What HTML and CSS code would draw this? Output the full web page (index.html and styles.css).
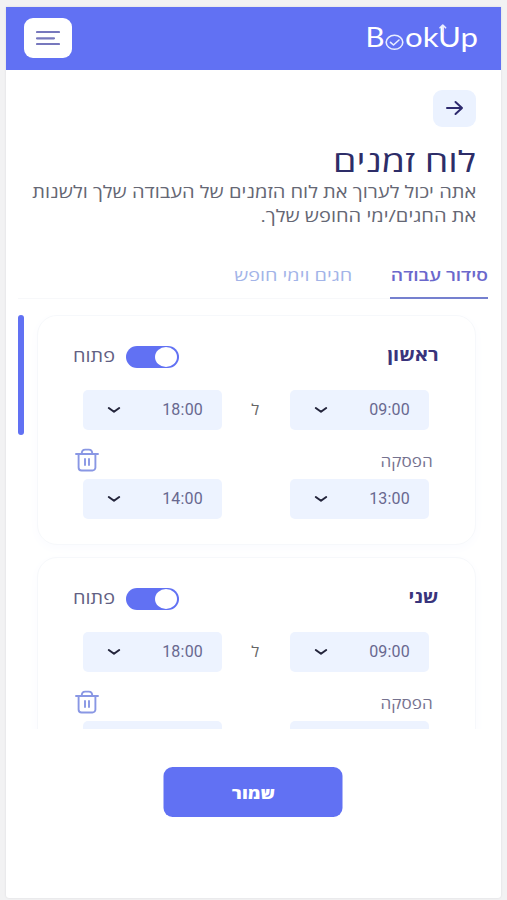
FILE: index.html
```html
<!DOCTYPE html>
<html lang="he" dir="rtl">
<head>
<meta charset="utf-8">
<title>BookUp</title>
<link rel="stylesheet" href="styles.css">
</head>
<body>
<svg class="defs" aria-hidden="true">
  <symbol id="chevron" viewBox="0 0 14 8"><path d="M1.800 2 7 5.800l5.200-3.800"/></symbol>
  <symbol id="trash" viewBox="0 0 24 24"><path d="M1 6h22M3.600 6v13.500a3 3 0 0 0 3 3h10.800a3 3 0 0 0 3-3V6M6.700 6c0-3 1.300-4.400 3.500-4.400h3.600c2.200 0 3.500 1.400 3.500 4.400M10 11v6M14 11v6"/></symbol>
</svg>
<div class="app">
  <header class="topbar">
    <svg class="logo" viewBox="0 0 114 34">
      <g class="logo-text">
        <text x="-.5" y="26.500" textLength="19" lengthAdjust="spacingAndGlyphs">B</text>
        <text x="39" y="26.500" textLength="73" lengthAdjust="spacingAndGlyphs">okUp</text>
      </g>
      <g class="logo-mark"><ellipse cx="28.500" cy="22.300" rx="8.300" ry="7"/><path d="m24.500 22.300 3 2.700 5.500-5M76.800 12V5M74 7.800 76.800 5 79.600 7.800"/></g>
    </svg>
    <button class="menu" aria-label="תפריט"><svg viewBox="0 0 24 16"><path d="M1 2h22M1 8.300h17M1 14h22"/></svg></button>
  </header>
  <main class="page">
    <button class="back" aria-label="חזרה"><svg viewBox="0 0 18 16"><path d="M1 8h15M9.500 2 16 8l-6.500 6"/></svg></button>
    <h1 class="title">לוח זמנים</h1>
    <p class="intro">אתה יכול לערוך את לוח הזמנים של העבודה שלך ולשנות<br>את החגים/ימי החופש שלך.</p>
    <nav class="tabs">
      <a class="tab active"><span>סידור עבודה</span></a>
      <a class="tab"><span>חגים וימי חופש</span></a>
    </nav>
    <div class="scroller">
      <div class="days">
        <section class="card">
          <div class="head"><h2 class="day">ראשון</h2><span class="toggle"></span><span class="state">פתוח</span></div>
          <div class="times">
            <div class="select"><span>09:00</span><svg><use href="#chevron"/></svg></div>
            <span class="to">ל</span>
            <div class="select"><span>18:00</span><svg><use href="#chevron"/></svg></div>
          </div>
          <div class="break"><span class="break-name">הפסקה</span><svg><use href="#trash"/></svg></div>
          <div class="times">
            <div class="select"><span>13:00</span><svg><use href="#chevron"/></svg></div>
            <div class="select"><span>14:00</span><svg><use href="#chevron"/></svg></div>
          </div>
        </section>
        <section class="card">
          <div class="head"><h2 class="day">שני</h2><span class="toggle"></span><span class="state">פתוח</span></div>
          <div class="times">
            <div class="select"><span>09:00</span><svg><use href="#chevron"/></svg></div>
            <span class="to">ל</span>
            <div class="select"><span>18:00</span><svg><use href="#chevron"/></svg></div>
          </div>
          <div class="break"><span class="break-name">הפסקה</span><svg><use href="#trash"/></svg></div>
          <div class="times">
            <div class="select"></div>
            <div class="select"></div>
          </div>
        </section>
      </div>
      <div class="track"><div class="thumb"></div></div>
    </div>
    <button class="save"><span>שמור</span></button>
  </main>
</div>
</body>
</html>
```
FILE: styles.css
```css
* { box-sizing: border-box; }
body { margin: 0; height: 900px; overflow: hidden; padding: 7px 6px 2px; background: #f2f2f3; font-family: "Open Sans", "Noto Sans", sans-serif; }
button { border: 0; padding: 0; font-family: inherit; display: flex; align-items: center; justify-content: center; }
svg { fill: none; stroke-linecap: round; stroke-linejoin: round; display: block; }
.defs { width: 0; height: 0; position: absolute; }
.app { height: 891px; background: #fff; border-radius: 0 0 3px 3px; box-shadow: 0 0 2px #d5d5d9; overflow: hidden; }
.topbar { height: 63px; background: #6171f3; display: flex; justify-content: space-between; align-items: flex-start; padding: 11px 21px 0 18px; }
.logo { width: 114px; height: 34px; margin-top: 2px; direction: ltr; }
.logo-text { fill: #fff; font: 400 26px Lato, sans-serif; }
.logo-mark { stroke: #e8edff; stroke-width: 1.6; }
.menu { width: 48px; height: 40px; border-radius: 9px; background: #fff; }
.menu svg { width: 24px; height: 16px; stroke: #7778bd; stroke-width: 2.2; }
.page { display: flex; flex-direction: column; }
.back { width: 43px; height: 37px; margin: 20px 25px 0 0; border-radius: 9px; background: #ebf2ff; }
.back svg { width: 18px; height: 16px; stroke: #2d2a6e; stroke-width: 2; transform: translateY(-1px); }
.title, .intro, .tab span, .day, .state, .to, .break-name { transform-origin: right center; }
.title { margin: 15px 25px 0 0; height: 38px; line-height: 38px; font-size: 29px; font-weight: 400; color: #2d2d68; transform: scaleX(1.295); }
.intro { width: max-content; margin: 0 25px 0 0; font-size: 17px; line-height: 24px; color: #656774; white-space: nowrap; transform: scaleX(1.18); }
.tabs { display: flex; gap: 38px; height: 46px; margin: 25px 13px 0 12px; border-bottom: 1px solid #f7f8fa; }
.tab { height: 46px; line-height: 44px; font-size: 16px; color: #a3b4e8; white-space: nowrap; }
.tab span { display: block; width: max-content; transform: scaleX(1.24); }
.tab.active { width: 98px; color: #6b68cc; font-weight: 600; border-bottom: 2px solid #7580cf; }
.tab.active span { transform: scaleX(1.2); }
.scroller { display: flex; justify-content: space-between; height: 414px; margin: 16px 0 0 12px; overflow: hidden; }
.days { width: 439px; margin-right: 25px; display: flex; flex-direction: column; gap: 12px; }
.card { flex: none; height: 230px; border: 1px solid #f6f8fb; border-radius: 20px; padding: 28px 36px 0 35px; box-shadow: 0 3px 12px #fafbff; }
.head { display: flex; align-items: center; height: 26px; }
.day { margin: 0 0 5px auto; font-size: 17px; font-weight: 700; color: #39347c; transform: scaleX(1.18); }
.toggle { width: 53px; height: 22px; border-radius: 11px; background: #6171f3; display: flex; justify-content: flex-start; padding: 1px 2px; }
.toggle::after { content: ""; width: 22px; height: 20px; border-radius: 50%; background: #fff; }
.state { width: 42px; margin: 0 11px 2px 0; font-size: 17px; line-height: 24px; color: #625f83; transform: scaleX(1.17); }
.times { display: flex; justify-content: space-between; align-items: center; height: 40px; padding: 0 10px; }
.head + .times { margin-top: 20px; }
.select { width: 139px; height: 40px; border-radius: 5px; background: #edf3ff; display: flex; align-items: center; justify-content: space-between; padding: 0 19px 0 24px; font-family: Roboto, sans-serif; font-size: 16px; letter-spacing: .2px; color: #68688f; }
.select span { margin-bottom: 1px; }
.select svg { width: 14px; height: 8px; stroke: #23243b; stroke-width: 2; }
.to { font-size: 15px; color: #666; transform: scaleX(1.1); margin-bottom: 2px; }
.break { display: flex; justify-content: space-between; align-items: center; height: 49px; padding: 12px 6px 0 2px; }
.break-name { font-size: 15px; color: #75728f; transform: scaleX(1.14); }
.break svg { width: 24px; height: 24px; stroke: #8997e4; stroke-width: 1.9; transform: translateY(-1px); }
.track { width: 6px; }
.thumb { height: 120px; border-radius: 3px; background: #6171f3; }
.save { width: 179px; height: 50px; margin: 38px auto 0; transform: translateX(-.5px); border-radius: 9px; background: #6171f3; color: #fff; font-size: 16px; font-weight: 800; }
.save span { transform: translateY(1px) scaleX(1.14); }
```
